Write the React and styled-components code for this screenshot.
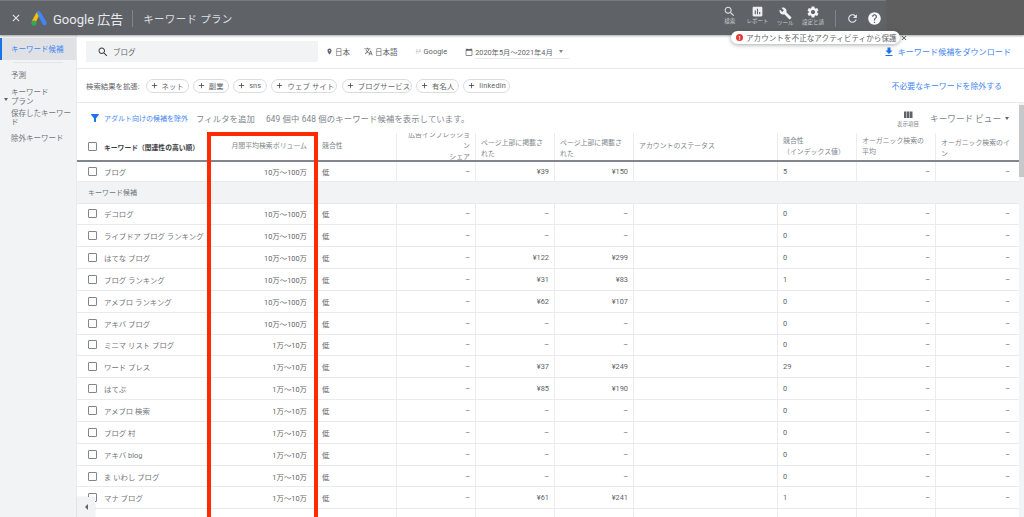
import React from "react";
import styled, { createGlobalStyle } from "styled-components";

const paths = {
  close: "M19 6.41L17.59 5 12 10.59 6.41 5 5 6.41 10.59 12 5 17.59 6.41 19 12 13.41 17.59 19 19 17.59 13.41 12z",
  search: "M15.5 14h-.79l-.28-.27C15.41 12.59 16 11.11 16 9.5 16 5.91 13.09 3 9.5 3S3 5.91 3 9.5 5.91 16 9.5 16c1.61 0 3.09-.59 4.23-1.57l.27.28v.79l5 4.99L20.49 19l-4.99-5zm-6 0C7.01 14 5 11.99 5 9.5S7.01 5 9.5 5 14 7.01 14 9.5 11.99 14 9.5 14z",
  report: "M19 3H5c-1.1 0-2 .9-2 2v14c0 1.1.9 2 2 2h14c1.1 0 2-.9 2-2V5c0-1.1-.9-2-2-2zM9 17H7v-7h2v7zm4 0h-2V7h2v10zm4 0h-2v-4h2v4z",
  build: "M22.7 19l-9.1-9.1c.9-2.3.4-5-1.5-6.9-2-2-5-2.4-7.4-1.3L9 6 6 9 1.6 4.7C.4 7.1.9 10.1 2.9 12.1c1.9 1.9 4.6 2.4 6.9 1.5l9.1 9.1c.4.4 1 .4 1.4 0l2.3-2.3c.5-.4.5-1.1.1-1.4z",
  settings: "M19.14 12.94c.04-.3.06-.61.06-.94 0-.32-.02-.64-.07-.94l2.03-1.58c.18-.14.23-.41.12-.61l-1.92-3.32c-.12-.22-.37-.29-.59-.22l-2.39.96c-.5-.38-1.03-.7-1.62-.94l-.36-2.54c-.04-.24-.24-.41-.48-.41h-3.84c-.24 0-.43.17-.47.41l-.36 2.54c-.59.24-1.13.57-1.62.94l-2.39-.96c-.22-.08-.47 0-.59.22L2.74 8.87c-.12.21-.08.47.12.61l2.03 1.58c-.05.3-.09.63-.09.94s.02.64.07.94l-2.03 1.58c-.18.14-.23.41-.12.61l1.92 3.32c.12.22.37.29.59.22l2.39-.96c.5.38 1.03.7 1.62.94l.36 2.54c.05.24.24.41.48.41h3.84c.24 0 .44-.17.47-.41l.36-2.54c.59-.24 1.13-.56 1.62-.94l2.39.96c.22.08.47 0 .59-.22l1.92-3.32c.12-.22.07-.47-.12-.61l-2.01-1.58zM12 15.6c-1.98 0-3.6-1.62-3.6-3.6s1.62-3.6 3.6-3.6 3.6 1.62 3.6 3.6-1.62 3.6-3.6 3.6z",
  refresh: "M17.65 6.35C16.2 4.9 14.21 4 12 4c-4.42 0-7.99 3.58-7.99 8s3.57 8 7.99 8c3.73 0 6.84-2.55 7.73-6h-2.08c-.82 2.33-3.04 4-5.65 4-3.31 0-6-2.69-6-6s2.69-6 6-6c1.66 0 3.14.69 4.22 1.78L13 11h7V4l-2.35 2.35z",
  help: "M12 2C6.48 2 2 6.48 2 12s4.48 10 10 10 10-4.48 10-10S17.52 2 12 2zm1 17h-2v-2h2v2zm2.07-7.75l-.9.92C13.45 12.9 13 13.5 13 15h-2v-.5c0-1.1.45-2.1 1.17-2.83l1.24-1.26c.37-.36.59-.86.59-1.41 0-1.1-.9-2-2-2s-2 .9-2 2H8c0-2.21 1.79-4 4-4s4 1.79 4 4c0 .88-.36 1.68-.93 2.25z",
  download: "M19 9h-4V3H9v6H5l7 7 7-7zM5 18v2h14v-2H5z",
  filter: "M4.25 5.61C6.27 8.2 10 13 10 13v6c0 .55.45 1 1 1h2c.55 0 1-.45 1-1v-6s3.72-4.8 5.74-7.39c.51-.66.04-1.61-.79-1.61H5.04c-.83 0-1.3.95-.79 1.61z",
  columns: "M10 18h5V5h-5v13zm-6 0h5V5H4v13zM16 5v13h5V5h-5z",
  place: "M12 2C8.13 2 5 5.13 5 9c0 5.25 7 13 7 13s7-7.75 7-13c0-3.87-3.13-7-7-7zm0 9.5c-1.38 0-2.5-1.12-2.5-2.5s1.12-2.5 2.5-2.5 2.5 1.12 2.5 2.5-1.12 2.5-2.5 2.5z",
  translate: "M12.87 15.07l-2.54-2.51.03-.03c1.74-1.94 2.98-4.17 3.71-6.53H17V4h-7V2H8v2H1v1.99h11.17C11.5 7.92 10.44 9.75 9 11.35 8.07 10.32 7.3 9.19 6.69 8h-2c.73 1.63 1.73 3.17 2.98 4.56l-5.09 5.02L4 19l5-5 3.11 3.11.76-2.04zM18.5 10h-2L12 22h2l1.12-3h4.75L21 22h2l-4.5-12zm-2.62 7l1.62-4.33L19.12 17h-3.24z",
  calendar: "M20 3h-1V1h-2v2H7V1H5v2H4c-1.1 0-2 .9-2 2v16c0 1.1.9 2 2 2h16c1.1 0 2-.9 2-2V5c0-1.1-.9-2-2-2zm0 18H4V8h16v13z",
  network: "M3 6h8v2H3zm10 0h8v2h-8zM3 11h8v2H3zm10 2h8v-2h-8zM3 16h5v2H3zm7 0h3v2h-3z",
  plus: "M19 13h-6v6h-2v-6H5v-2h6V5h2v6h6v2z",
};

const Global = createGlobalStyle`
  html, body {
    margin: 0;
    padding: 0;
    background: #fff;
  }
  * {
    box-sizing: border-box;
  }
`;

const Page = styled.div`
  position: relative;
  width: 1024px;
  height: 517px;
  overflow: hidden;
  font-family: "Roboto", "Noto Sans CJK JP", sans-serif;
  color: #5f6368;
  background: #fff;
`;

const Svg = styled.svg`
  flex: none;
  width: ${(p) => p.$size}px;
  height: ${(p) => p.$size}px;
  fill: ${(p) => p.$color || "#5f6368"};
`;

const Icon = ({ name, size, color }) => (
  <Svg viewBox="0 0 24 24" $size={size} $color={color}>
    <path d={paths[name]} />
  </Svg>
);

/* top bar */
const Header = styled.header`
  display: flex;
  align-items: stretch;
  height: 35px;
  background: #5f6368;
  border-top: 1px solid #77797c;
  box-shadow: 0 1px 2px rgba(60, 64, 67, 0.45);
  position: relative;
`;
const HeaderLeft = styled.div`
  display: flex;
  align-items: center;
  padding-left: 10px;
  flex: 1;
`;
const Logo = styled.svg`
  width: 16px;
  height: 15px;
  margin-left: 9px;
  margin-right: 6px;
`;
const Brand = styled.span`
  font-size: 13px;
  color: #e8eaed;
  white-space: nowrap;
`;
const Divider = styled.span`
  width: 1px;
  height: 17px;
  background: #80868b;
  margin: ${(p) => p.$margin};
`;
const PageTitle = styled.span`
  font-size: 10.5px;
  letter-spacing: 0.3px;
  color: #dadce0;
  white-space: nowrap;
`;
const HeaderRight = styled.div`
  display: flex;
  align-items: center;
  width: 170px;
  padding-right: 0;
`;
const Tool = styled.div`
  width: 29.5px;
  display: flex;
  flex-direction: column;
  align-items: center;
  color: #c9cbce;
  font-size: 5.5px;
  line-height: 7px;
  white-space: nowrap;
  padding-top: ${(p) => p.$top || 0}px;
  margin-top: -6px;
`;
const RoundBtn = styled.div`
  width: 24px;
  display: flex;
  justify-content: center;
  margin-top: 1px;
`;
const HeaderEnd = styled.div`
  width: 138px;
  background: #5e5e5e;
  margin-top: -1px;
`;
const Notice = styled.div`
  position: absolute;
  left: 731px;
  top: 30px;
  width: 169px;
  height: 13px;
  display: flex;
  align-items: center;
  padding: 0 4px 0 5px;
  gap: 3px;
  border-radius: 7px;
  background: #fff;
  font-size: 7.6px;
  color: #5f6368;
  white-space: nowrap;
  box-shadow: 0 1px 4px rgba(60, 64, 67, 0.45);
`;
const NoticeDot = styled.span`
  flex: none;
  width: 7px;
  height: 7px;
  border-radius: 50%;
  background: #e53935;
  color: #fff;
  font-size: 6px;
  line-height: 7px;
  text-align: center;
  font-weight: 700;
`;
const NoticeClose = styled.span`
  margin-left: auto;
  display: flex;
`;

const Body = styled.div`
  display: flex;
  height: 482px;
`;

/* left menu */
const Side = styled.nav`
  flex: none;
  width: 77px;
  padding-top: 3px;
  background: #f1f3f4;
  border-right: 1px solid #e8eaed;
  font-size: 7.5px;
  line-height: 9px;
`;
const SideItem = styled.div`
  position: relative;
  display: flex;
  align-items: center;
  height: ${(p) => p.$h || 21}px;
  padding-left: 11px;
  color: ${(p) => (p.$active ? "#4285f4" : "#70757a")};
  background: ${(p) => (p.$active ? "#dfe1e5" : "transparent")};
  border-left: ${(p) => (p.$active ? "2px solid #1a73e8" : "none")};
  margin-left: 0;
  ${(p) => p.$active && "padding-left: 9px;"}
`;
const SideLine = styled.div`
  height: 1px;
  margin: 2px 13px 0;
  background: #e3e5e8;
`;
const SideCaret = styled.span`
  position: absolute;
  left: 4px;
  top: 11px;
  border: 2px solid transparent;
  border-top: 3px solid #5f6368;
  border-bottom: none;
`;

/* main column */
const Main = styled.main`
  flex: 1;
  min-width: 0;
  position: relative;
`;
const Bar = styled.div`
  display: flex;
  align-items: center;
  height: ${(p) => p.$h}px;
  border-bottom: 1px solid #e8eaed;
  padding-left: 9px;
  font-size: 8px;
  white-space: nowrap;
`;
const SearchBox = styled.div`
  display: flex;
  align-items: center;
  gap: 4px;
  width: 232px;
  height: 21px;
  padding-left: 11px;
  background: #f1f3f4;
  font-size: 7.5px;
  color: #5f6368;
`;
const Setting = styled.div`
  display: flex;
  align-items: center;
  gap: ${(p) => p.$gap || 2}px;
  margin-left: ${(p) => p.$left}px;
  font-size: 7.5px;
`;
const DateSelect = styled.div`
  display: flex;
  align-items: center;
  justify-content: space-between;
  width: 94px;
  height: 14px;
  margin-top: 1px;
  padding-right: 6px;
  border-bottom: 1px solid #e8eaed;
  font-size: 7.3px;
`;
const Caret = styled.span`
  border: ${(p) => p.$size || 2.5}px solid transparent;
  border-top: ${(p) => (p.$size || 2.5) + 0.5}px solid ${(p) => p.$color || "#80868b"};
  border-bottom: none;
`;
const BlueLink = styled.a`
  display: flex;
  align-items: center;
  gap: 3px;
  color: #4285f4;
  font-size: ${(p) => p.$size || 8}px;
  margin-left: ${(p) => p.$left || "0"};
  margin-right: ${(p) => p.$right || 0}px;
`;
const ExpandLabel = styled.span`
  font-size: 7.4px;
  margin-right: 6px;
`;
const Chip = styled.span`
  display: inline-flex;
  align-items: center;
  gap: 3px;
  width: ${(p) => p.$w}px;
  height: 14px;
  margin-right: 4.3px;
  padding-left: 3px;
  border: 1px solid #dadce0;
  border-radius: 7px;
  font-size: 7.3px;
  color: #5f6368;
  letter-spacing: 0.2px;
`;
const FilterBar = styled.div`
  display: flex;
  align-items: center;
  height: 30px;
  padding-left: 12px;
  white-space: nowrap;
  font-size: 8.3px;
  color: #80868b;
`;
const CountText = styled.span`
  margin-left: 11px;
  letter-spacing: 0.15px;
`;
const ColumnsBtn = styled.div`
  margin-left: auto;
  display: flex;
  flex-direction: column;
  align-items: center;
  font-size: 5.5px;
  line-height: 7px;
`;
const ViewSelect = styled.div`
  display: flex;
  align-items: center;
  gap: 4px;
  margin-left: 11px;
  margin-right: 15px;
  font-size: 8.6px;
  color: #80868b;
`;

/* table */
const Table = styled.div`
  width: 942px;
`;
const Row = styled.div`
  display: grid;
  grid-template-columns: 131px 104px 84px 79px 79px 79px 144px 79px 79px 84px;
  height: ${(p) => p.$h || 21.85}px;
  border-bottom: ${(p) => (p.$head ? "2px solid #80868b" : "1px solid #e8eaed")};
  font-size: 7.4px;
  background: #fff;
`;
const Cell = styled.div`
  display: flex;
  align-items: center;
  justify-content: ${(p) => (p.$right ? "flex-end" : "flex-start")};
  min-width: 0;
  overflow: hidden;
  padding: 0 5px 0 ${(p) => p.$pad || 5}px;
  border-left: ${(p) => (p.$noline ? "none" : "1px solid #ececee")};
  white-space: nowrap;
  text-align: ${(p) => (p.$right ? "right" : "left")};
  &:last-child {
    padding-right: 9px;
  }
`;
const HeadCell = styled(Cell)`
  color: #80868b;
  font-size: 6.9px;
  line-height: 11px;
  white-space: pre-line;
  align-items: ${(p) => (p.$upper ? "flex-start" : "center")};
  padding-top: ${(p) => (p.$upper ? 5 : 0)}px;
`;
const KeywordCell = styled(Cell)`
  gap: 7px;
  padding-left: 11px;
  color: #70757a;
`;
const HeadKeyword = styled(KeywordCell)`
  color: #3c4043;
  font-size: 6.8px;
  font-weight: 700;
`;
const Check = styled.span`
  flex: none;
  width: 9px;
  height: 9px;
  border: 1.4px solid #80868b;
  border-radius: 1px;
  background: #fff;
`;
const GroupRow = styled.div`
  display: flex;
  align-items: center;
  height: 21.5px;
  padding-left: 11px;
  background: #f1f3f4;
  border-bottom: 1px solid #e8eaed;
  font-size: 7px;
  color: #70757a;
`;

/* overlays */
const Highlight = styled.div`
  position: absolute;
  left: 206.5px;
  top: 132px;
  width: 111px;
  height: 400px;
  border: 4px solid #ff2a00;
  pointer-events: none;
`;
const ScrollThumb = styled.div`
  position: absolute;
  right: 0;
  top: 70px;
  width: 5px;
  height: 72px;
  background: #c6c8ca;
`;
const ScrollTrack = styled.div`
  position: absolute;
  right: 0;
  top: 68px;
  bottom: 0;
  width: 5px;
  background: #f1f3f4;
`;
const Collapse = styled.div`
  position: absolute;
  left: 77px;
  bottom: 0;
  width: 18px;
  height: 20px;
  display: flex;
  align-items: center;
  justify-content: center;
  background: #f1f3f4;
  border-radius: 0 2px 0 0;
  box-shadow: 0 0 1px rgba(60, 64, 67, 0.4);
`;
const CollapseArrow = styled.span`
  border: 3px solid transparent;
  border-right: 3px solid #5f6368;
  border-left: none;
`;

const big = "10万〜100万";
const small = "1万〜10万";
const rows = [
  ["デコログ", big, "–", "–", "0"],
  ["ライブドア ブログ ランキング", big, "–", "–", "0"],
  ["はてな ブログ", big, "¥122", "¥299", "0"],
  ["ブログ ランキング", big, "¥31", "¥83", "1"],
  ["アメブロ ランキング", big, "¥62", "¥107", "0"],
  ["アキバ ブログ", big, "–", "–", "0"],
  ["ミニマ リスト ブログ", small, "–", "–", "0"],
  ["ワード プレス", small, "¥37", "¥249", "29"],
  ["はてぶ", small, "¥85", "¥190", "0"],
  ["アメブロ 検索", small, "–", "–", "0"],
  ["ブログ 村", small, "–", "–", "0"],
  ["アキバ blog", small, "–", "–", "0"],
  ["ま いわし ブログ", small, "–", "–", "0"],
  ["マナ ブログ", small, "¥61", "¥241", "1"],
];
const chips = [
  ["ネット", 43],
  ["副業", 36],
  ["sns", 34],
  ["ウェブ サイト", 66],
  ["ブログサービス", 70],
  ["有名人", 43],
  ["linkedin", 47],
];

const KeywordRow = ({ row, h }) => (
  <Row $h={h}>
    <KeywordCell $noline>
      <Check />
      {row[0]}
    </KeywordCell>
    <Cell $right $noline>{row[1]}</Cell>
    <Cell $pad={10} $noline>低</Cell>
    <Cell $right>–</Cell>
    <Cell $right>{row[2]}</Cell>
    <Cell $right>{row[3]}</Cell>
    <Cell />
    <Cell>{row[4]}</Cell>
    <Cell $right>–</Cell>
    <Cell $right>–</Cell>
  </Row>
);

export default function App() {
  return (
    <Page>
      <Global />
      <Header>
        <HeaderLeft>
          <Icon name="close" size={12} color="#e8eaed" />
          <Logo viewBox="0 0 16 15">
            <path d="M5.4 1.4 L1 10 L4.4 12 L8.6 3.6 Z" fill="#fbbc04" />
            <path d="M5.6 1.2 a2.2 2.2 0 0 1 3.8 -0.2 L15.4 11 a2.2 2.2 0 0 1 -3.8 2.2 Z" fill="#4285f4" />
            <circle cx="3" cy="12" r="2.6" fill="#34a853" />
          </Logo>
          <Brand>Google 広告</Brand>
          <Divider $margin="0 10px 0 9px" />
          <PageTitle>キーワード プラン</PageTitle>
        </HeaderLeft>
        <HeaderRight>
          <Tool>
            <Icon name="search" size={13} color="#dfe1e3" />
            検索
          </Tool>
          <Tool>
            <Icon name="report" size={13} color="#eceef0" />
            レポート
          </Tool>
          <Tool $top={3}>
            <Icon name="build" size={13} color="#f1f3f4" />
            ツール
          </Tool>
          <Tool>
            <Icon name="settings" size={14} color="#f1f3f4" />
            設定と請
          </Tool>
          <Divider $margin="0 5px 0 8px" />
          <RoundBtn>
            <Icon name="refresh" size={13} color="#e8eaed" />
          </RoundBtn>
          <RoundBtn>
            <Icon name="help" size={15} color="#f8f9fa" />
          </RoundBtn>
        </HeaderRight>
        <HeaderEnd />
        <Notice>
          <NoticeDot>!</NoticeDot>
          アカウントを不正なアクティビティから保護
          <NoticeClose>
            <Icon name="close" size={8} color="#3c4043" />
          </NoticeClose>
        </Notice>
      </Header>

      <Body>
        <Side>
          <SideItem $active $h={22}>キーワード候補</SideItem>
          <SideLine />
          <SideItem $h={24}>予測</SideItem>
          <SideItem $h={20}>
            <SideCaret />
            キーワード
            <br />
            プラン
          </SideItem>
          <SideItem $h={21}>保存したキーワード</SideItem>
          <SideItem $h={21}>除外キーワード</SideItem>
        </Side>

        <Main>
          <Bar $h={34}>
            <SearchBox>
              <Icon name="search" size={12} color="#3c4043" />
              ブログ
            </SearchBox>
            <Setting $left={8}>
              <Icon name="place" size={7} />
              日本
            </Setting>
            <Setting $left={14}>
              <Icon name="translate" size={9} />
              日本語
            </Setting>
            <Setting $left={17}>
              <Icon name="network" size={7} color="#9aa0a6" />
              Google
            </Setting>
            <Setting $left={18} $gap={2}>
              <Icon name="calendar" size={8} />
              <DateSelect>
                2020年5月〜2021年4月
                <Caret />
              </DateSelect>
            </Setting>
            <BlueLink $size={8.1} $left="auto" $right={13}>
              <Icon name="download" size={12} color="#1a73e8" />
              キーワード候補をダウンロード
            </BlueLink>
          </Bar>
          <Bar $h={34}>
            <ExpandLabel>検索結果を拡張:</ExpandLabel>
            {chips.map((chip) => (
              <Chip key={chip[0]} $w={chip[1]}>
                <Icon name="plus" size={9} color="#3c4043" />
                {chip[0]}
              </Chip>
            ))}
            <BlueLink $size={7.9} $left="auto" $right={22}>
              不必要なキーワードを除外する
            </BlueLink>
          </Bar>
          <FilterBar>
            <Icon name="filter" size={12} color="#1a73e8" />
            <BlueLink $size={7} $left="3px">アダルト向けの候補を除外</BlueLink>
            <CountText as="span" style={{ marginLeft: 8 }}>フィルタを追加</CountText>
            <CountText>649 個中 648 個のキーワード候補を表示しています。</CountText>
            <ColumnsBtn>
              <Icon name="columns" size={12} />
              表示項目
            </ColumnsBtn>
            <ViewSelect>
              キーワード ビュー
              <Caret $color="#5f6368" />
            </ViewSelect>
          </FilterBar>
          <Table>
            <Row $head $h={29}>
              <HeadKeyword $noline>
                <Check />
                キーワード（関連性の高い順）
              </HeadKeyword>
              <HeadCell $right $noline>月間平均検索ボリューム</HeadCell>
              <HeadCell $pad={10} $noline>競合性</HeadCell>
              <HeadCell $right>{"広告インプレッション\nシェア"}</HeadCell>
              <HeadCell $upper>ページ上部に掲載された</HeadCell>
              <HeadCell $upper>ページ上部に掲載された</HeadCell>
              <HeadCell>アカウントのステータス</HeadCell>
              <HeadCell>{"競合性\n（インデックス値）"}</HeadCell>
              <HeadCell>オーガニック検索の平均</HeadCell>
              <HeadCell $upper>オーガニック検索のイン</HeadCell>
            </Row>
            <KeywordRow row={["ブログ", big, "¥39", "¥150", "5"]} h={20} />
            <GroupRow>キーワード候補</GroupRow>
            {rows.map((row) => (
              <KeywordRow key={row[0]} row={row} />
            ))}
            <Row>
              <Cell $noline />
              <Cell $noline />
              <Cell $noline />
              <Cell />
              <Cell />
              <Cell />
              <Cell />
              <Cell />
              <Cell />
              <Cell />
            </Row>
          </Table>
          <ScrollTrack />
          <ScrollThumb />
        </Main>
      </Body>

      <Highlight />
      <Collapse>
        <CollapseArrow />
      </Collapse>
    </Page>
  );
}
